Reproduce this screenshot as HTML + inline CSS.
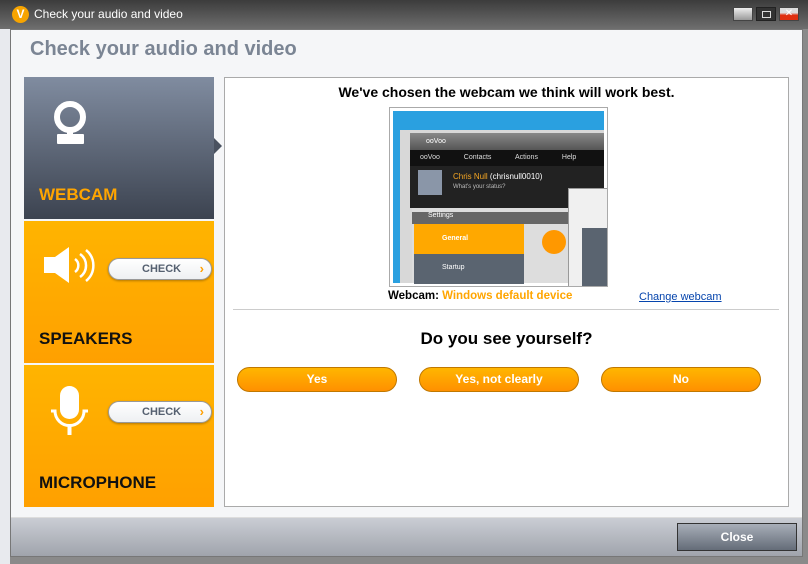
<!DOCTYPE html>
<html><head><style>
*{margin:0;padding:0;box-sizing:border-box}
body{width:808px;height:564px;overflow:hidden;background:#8a8a8a;font-family:"Liberation Sans",Arial,sans-serif;position:relative}
.a{position:absolute}
.title{left:0;top:0;width:808px;height:29px;background:linear-gradient(#3c3c3c,#6e6e6e);}
.client{left:10px;top:29px;width:793px;height:528px;background:#f5f6f8;border:1px solid #777}
.panel{left:24px;width:190px;height:142px}
.chk{width:104px;height:22px;border-radius:11px;background:linear-gradient(#fff,#eef0f2);border:1px solid #999;box-shadow:0 1px 2px rgba(0,0,0,.3);font-size:11px;font-weight:bold;color:#556070;line-height:20px;padding-left:33px}
.chk span{color:#ff9f00;position:absolute;right:7px;top:0;font-size:13px}
.lbl{font-size:17px;font-weight:bold;left:15px}
.ob{height:25px;width:160px;border-radius:13px;background:linear-gradient(#ffb600,#ff9000);border:1px solid #c07800;color:#fff;font-weight:bold;font-size:12px;text-align:center;line-height:23px;top:367px}
</style></head><body>
<div class="a" style="left:0;top:29px;width:10px;height:535px;background:#e8eaee"></div>
<div class="a title"></div>
<div class="a" style="left:12px;top:6px;width:17px;height:17px;border-radius:50%;background:#f7a400;color:#fff;font-weight:bold;font-size:12px;text-align:center;line-height:17px">V</div>
<div class="a" style="left:34px;top:7px;color:#fff;font-size:12px">Check your audio and video</div>
<div class="a" style="left:733px;top:7px;width:20px;height:14px;background:linear-gradient(#eee,#999);border:1px solid #444"></div>
<div class="a" style="left:756px;top:7px;width:20px;height:14px;background:#333;border:1px solid #222"><div style="margin:3px 5px;width:9px;height:7px;border:1px solid #ddd"></div></div>
<div class="a" style="left:779px;top:7px;width:20px;height:14px;background:linear-gradient(#ddd 40%,#e03010 60%);border:1px solid #444;color:#fff;font-size:10px;text-align:center;line-height:12px">✕</div>
<div class="a client"></div>
<div class="a" style="left:30px;top:38px;font-size:20px;font-weight:bold;color:#7b8594">Check your audio and video</div>

<div class="a panel" style="top:77px;background:linear-gradient(#808ca0,#3c4350)">
 <svg class="a" style="left:28px;top:20px" width="40" height="50" viewBox="0 0 40 50"><circle cx="18" cy="20" r="13" fill="none" stroke="#fff" stroke-width="6"/><rect x="15" y="34" width="6" height="5" fill="#fff"/><rect x="5" y="37" width="27" height="10" rx="1" fill="#fff"/></svg>
 <div class="a lbl" style="top:108px;color:#ffa500">WEBCAM</div>
</div>
<div class="a" style="left:214px;top:138px;width:0;height:0;border-top:8px solid transparent;border-bottom:8px solid transparent;border-left:8px solid #4a5260"></div>

<div class="a panel" style="top:221px;background:linear-gradient(#ffb400,#ffa000)">
 <svg class="a" style="left:19px;top:25px" width="56" height="40" viewBox="0 0 56 40"><path d="M1 11h11l14-10v36L12 27H1z" fill="#fff"/><path d="M32 13a8 8 0 0 1 0 13M37 8a14 14 0 0 1 0 23M43 4a20 20 0 0 1 0 31" stroke="#fff" stroke-width="2.5" fill="none"/></svg>
 <div class="a chk" style="left:84px;top:37px">CHECK<span>›</span></div>
 <div class="a lbl" style="top:108px;color:#111">SPEAKERS</div>
</div>
<div class="a panel" style="top:365px;background:linear-gradient(#ffb400,#ffa000)">
 <svg class="a" style="left:26px;top:20px" width="42" height="52" viewBox="0 0 42 52"><rect x="10" y="1" width="19" height="33" rx="9.5" fill="#fff"/><path d="M1 26h4a14.5 14.5 0 0 0 29 0h4" stroke="#fff" stroke-width="3" fill="none"/><rect x="17.5" y="40" width="4" height="10" fill="#fff"/></svg>
 <div class="a chk" style="left:84px;top:36px">CHECK<span>›</span></div>
 <div class="a lbl" style="top:108px;color:#111">MICROPHONE</div>
</div>

<div class="a" style="left:224px;top:77px;width:565px;height:430px;background:#fff;border:1px solid #aaa"></div>
<div class="a" style="left:224px;top:84px;width:565px;text-align:center;font-size:14px;font-weight:bold">We've chosen the webcam we think will work best.</div>
<div class="a" style="left:389px;top:107px;width:219px;height:180px;border:1px solid #aaa;background:#fff;overflow:hidden">
 <div class="a" style="left:3px;top:3px;width:211px;height:172px;background:#2aa0e0"></div>
 <div class="a" style="left:10px;top:22px;width:204px;height:153px;background:#d8d8d8"></div>
 <div class="a" style="left:20px;top:25px;width:194px;height:17px;background:linear-gradient(#888,#555);color:#fff;font-size:7px;line-height:17px;padding-left:16px">ooVoo</div>
 <div class="a" style="left:20px;top:42px;width:194px;height:16px;background:#111;color:#ddd;font-size:7px;line-height:16px;padding-left:10px;word-spacing:22px">ooVoo Contacts Actions Help</div>
 <div class="a" style="left:20px;top:58px;width:194px;height:42px;background:#222;color:#f5a623;font-size:8px;padding:6px 0 0 43px">Chris Null <span style="color:#fff">(chrisnull0010)</span><div style="color:#bbb;font-size:6px;margin-top:3px">What's your status?</div></div>
 <div class="a" style="left:28px;top:62px;width:24px;height:25px;background:#8a96a8"></div>
 <div class="a" style="left:22px;top:100px;width:160px;height:75px;background:#ddd"></div>
 <div class="a" style="left:22px;top:104px;width:160px;height:12px;background:#666;color:#fff;font-size:7px;padding-left:16px">Settings</div>
 <div class="a" style="left:24px;top:116px;width:110px;height:30px;background:#ffa800;color:#fff;font-size:7px;font-weight:bold;line-height:30px;padding-left:28px">General</div>
 <div class="a" style="left:24px;top:146px;width:110px;height:30px;background:#5a6470;color:#fff;font-size:7px;line-height:28px;padding-left:28px">Startup</div>
 <div class="a" style="left:178px;top:80px;width:40px;height:100px;background:#f0f0f0;border:1px solid #999"></div>
 <div class="a" style="left:192px;top:120px;width:30px;height:60px;background:#5a6470"></div>
 <div class="a" style="left:152px;top:122px;width:24px;height:24px;border-radius:50%;background:#ff9800"></div>
</div>
<div class="a" style="left:388px;top:290px;font-size:11.5px;font-weight:bold">Webcam: <span style="color:#ffa500">Windows default device</span></div>
<div class="a" style="left:639px;top:291px;font-size:11px;color:#0645ad;text-decoration:underline">Change webcam</div>
<div class="a" style="left:233px;top:309px;width:546px;height:1px;background:#ccc"></div>
<div class="a" style="left:224px;top:329px;width:565px;text-align:center;font-size:17px;font-weight:bold">Do you see yourself?</div>
<div class="a ob" style="left:237px">Yes</div>
<div class="a ob" style="left:419px">Yes, not clearly</div>
<div class="a ob" style="left:601px">No</div>

<div class="a" style="left:11px;top:517px;width:791px;height:39px;background:linear-gradient(#cacdd4,#a0a4ac);border-top:1px solid #ddd"></div>
<div class="a" style="left:677px;top:523px;width:120px;height:28px;background:linear-gradient(#a8aeb8,#646c78);border:1px solid #333;color:#fff;font-weight:bold;font-size:12px;text-align:center;line-height:26px">Close</div>
</body></html>
